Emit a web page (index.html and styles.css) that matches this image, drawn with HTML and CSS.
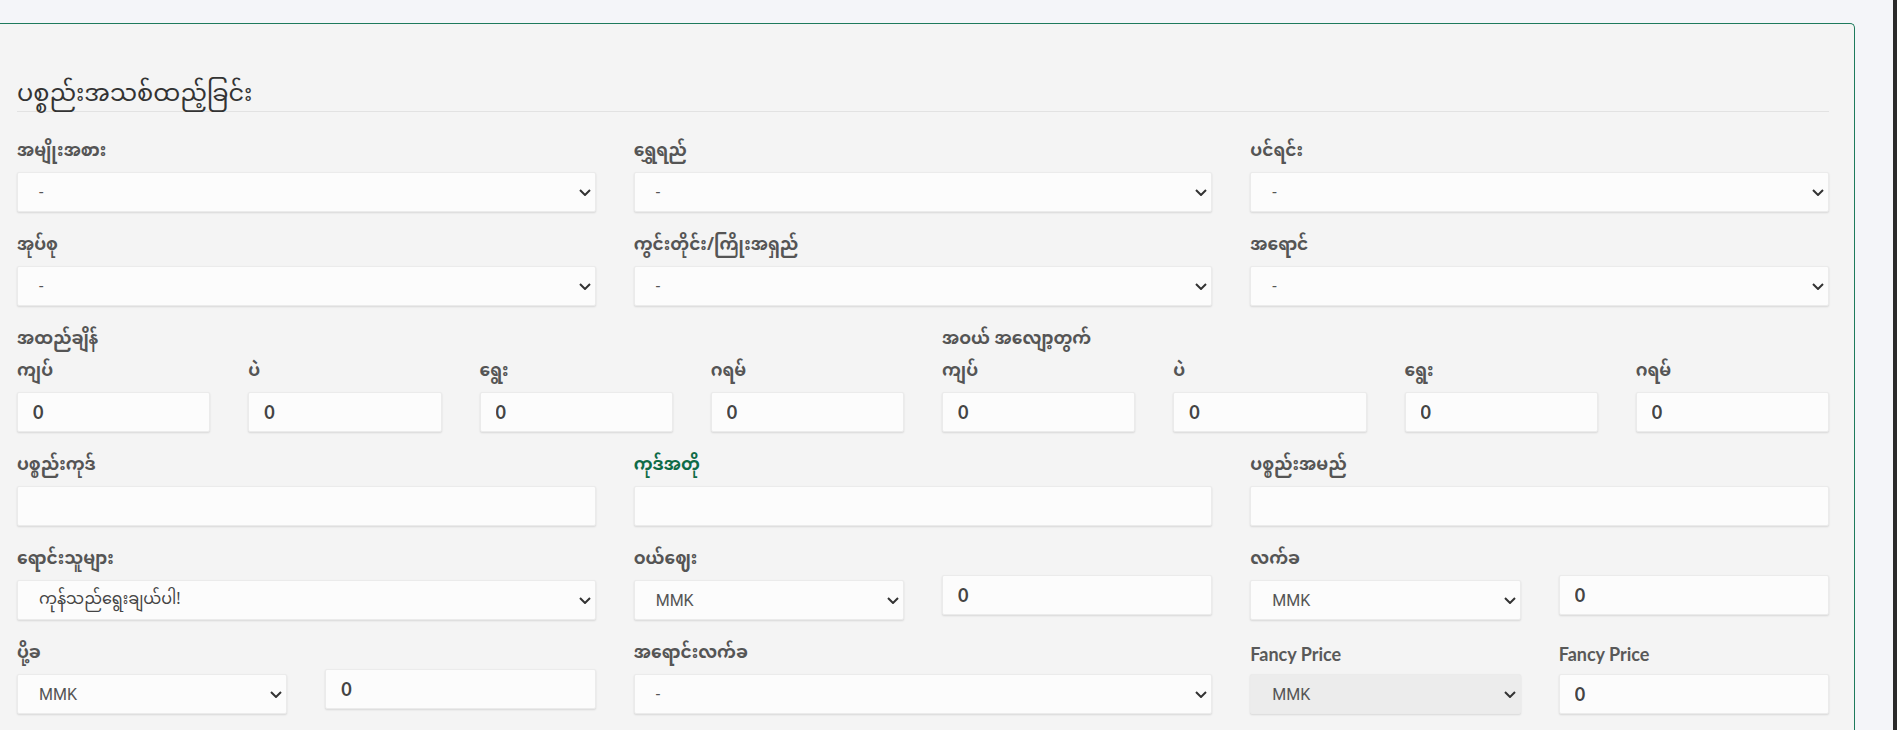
FILE: index.html
```html
<!DOCTYPE html>
<html lang="my">
<head>
<meta charset="utf-8">
<title>ပစ္စည်းအသစ်ထည့်ခြင်း</title>
<link rel="stylesheet" href="styles.css">
</head>
<body>
<div class="page">
  <main class="main">
    <section class="card">
      <div class="heading"><h4 class="title">ပစ္စည်းအသစ်ထည့်ခြင်း</h4></div>

      <div class="row3">
        <div class="group">
          <label class="lbl">အမျိုးအစား</label>
          <div class="sel"><span>-</span><svg class="chev" viewBox="0 0 12 7" width="12" height="7"><path d="M1 1l5 5 5-5"/></svg></div>
        </div>
        <div class="group">
          <label class="lbl">ရွှေရည်</label>
          <div class="sel"><span>-</span><svg class="chev" viewBox="0 0 12 7" width="12" height="7"><path d="M1 1l5 5 5-5"/></svg></div>
        </div>
        <div class="group">
          <label class="lbl">ပင်ရင်း</label>
          <div class="sel"><span>-</span><svg class="chev" viewBox="0 0 12 7" width="12" height="7"><path d="M1 1l5 5 5-5"/></svg></div>
        </div>
      </div>

      <div class="row3">
        <div class="group">
          <label class="lbl">အုပ်စု</label>
          <div class="sel"><span>-</span><svg class="chev" viewBox="0 0 12 7" width="12" height="7"><path d="M1 1l5 5 5-5"/></svg></div>
        </div>
        <div class="group">
          <label class="lbl">ကွင်းတိုင်း/ကြိုးအရှည်</label>
          <div class="sel"><span>-</span><svg class="chev" viewBox="0 0 12 7" width="12" height="7"><path d="M1 1l5 5 5-5"/></svg></div>
        </div>
        <div class="group">
          <label class="lbl">အရောင်</label>
          <div class="sel"><span>-</span><svg class="chev" viewBox="0 0 12 7" width="12" height="7"><path d="M1 1l5 5 5-5"/></svg></div>
        </div>
      </div>

      <div class="weights">
        <div class="half">
          <div class="lbl head">အထည်ချိန်</div>
          <div class="row4">
            <div class="group"><label class="lbl">ကျပ်</label><input class="inp" type="text" value="0"></div>
            <div class="group"><label class="lbl">ပဲ</label><input class="inp" type="text" value="0"></div>
            <div class="group"><label class="lbl">ရွေး</label><input class="inp" type="text" value="0"></div>
            <div class="group"><label class="lbl">ဂရမ်</label><input class="inp" type="text" value="0"></div>
          </div>
        </div>
        <div class="half">
          <div class="lbl head">အဝယ် အလျော့တွက်</div>
          <div class="row4">
            <div class="group"><label class="lbl">ကျပ်</label><input class="inp" type="text" value="0"></div>
            <div class="group"><label class="lbl">ပဲ</label><input class="inp" type="text" value="0"></div>
            <div class="group"><label class="lbl">ရွေး</label><input class="inp" type="text" value="0"></div>
            <div class="group"><label class="lbl">ဂရမ်</label><input class="inp" type="text" value="0"></div>
          </div>
        </div>
      </div>

      <div class="row3">
        <div class="group">
          <label class="lbl">ပစ္စည်းကုဒ်</label>
          <input class="inp" type="text" value="">
        </div>
        <div class="group">
          <label class="lbl green">ကုဒ်အတို</label>
          <input class="inp" type="text" value="">
        </div>
        <div class="group">
          <label class="lbl">ပစ္စည်းအမည်</label>
          <input class="inp" type="text" value="">
        </div>
      </div>

      <div class="row3">
        <div class="group">
          <label class="lbl">ရောင်းသူများ</label>
          <div class="sel"><span class="mm">ကုန်သည်ရွေးချယ်ပါ!</span><svg class="chev" viewBox="0 0 12 7" width="12" height="7"><path d="M1 1l5 5 5-5"/></svg></div>
        </div>
        <div class="row2">
          <div class="group">
            <label class="lbl">ဝယ်ဈေး</label>
            <div class="sel"><span>MMK</span><svg class="chev" viewBox="0 0 12 7" width="12" height="7"><path d="M1 1l5 5 5-5"/></svg></div>
          </div>
          <div class="group nolabel"><input class="inp" type="text" value="0"></div>
        </div>
        <div class="row2">
          <div class="group">
            <label class="lbl">လက်ခ</label>
            <div class="sel"><span>MMK</span><svg class="chev" viewBox="0 0 12 7" width="12" height="7"><path d="M1 1l5 5 5-5"/></svg></div>
          </div>
          <div class="group nolabel"><input class="inp" type="text" value="0"></div>
        </div>
      </div>

      <div class="row3">
        <div class="row2">
          <div class="group">
            <label class="lbl">ပို့ခ</label>
            <div class="sel"><span>MMK</span><svg class="chev" viewBox="0 0 12 7" width="12" height="7"><path d="M1 1l5 5 5-5"/></svg></div>
          </div>
          <div class="group nolabel"><input class="inp" type="text" value="0"></div>
        </div>
        <div class="group">
          <label class="lbl">အရောင်းလက်ခ</label>
          <div class="sel"><span>-</span><svg class="chev" viewBox="0 0 12 7" width="12" height="7"><path d="M1 1l5 5 5-5"/></svg></div>
        </div>
        <div class="row2">
          <div class="group">
            <label class="lbl en">Fancy Price</label>
            <div class="sel disabled"><span>MMK</span><svg class="chev" viewBox="0 0 12 7" width="12" height="7"><path d="M1 1l5 5 5-5"/></svg></div>
          </div>
          <div class="group">
            <label class="lbl en">Fancy Price</label>
            <input class="inp" type="text" value="0">
          </div>
        </div>
      </div>
    </section>
  </main>
  <aside class="edge"></aside>
</div>
</body>
</html>
```
FILE: styles.css
```css
html, body {
  margin: 0;
  padding: 0;
  height: 100%;
  overflow: hidden;
}
body {
  background: #f4f5f9;
  font-family: "Noto Sans Myanmar", "Padauk", "Myanmar Text", "Noto Sans", sans-serif;
  color: #333;
}
.page {
  display: flex;
  min-height: 730px;
}
.main {
  flex: 1;
  padding: 23px 38px 0 0;
}
.edge {
  width: 4px;
  background: #2a2a2a;
}
.card {
  background: #f4f4f4;
  border: 1px solid #1d7a5c;
  border-left: none;
  border-bottom: none;
  border-top-right-radius: 5px;
  padding: 0 25px 40px 17px;
  min-height: 720px;
}
.heading {
  height: 87px;
  display: flex;
  align-items: flex-end;
  border-bottom: 1px solid #e2e2e2;
  margin-bottom: 30px;
}
.title {
  margin: 0;
  font-size: 24px;
  font-weight: 400;
  line-height: 30px;
  color: #333;
}
.row3 {
  display: grid;
  grid-template-columns: repeat(3, 1fr);
  column-gap: 38px;
  margin-bottom: 24px;
}
.row2 {
  display: grid;
  grid-template-columns: 1fr 1fr;
  column-gap: 38px;
}
.weights {
  display: grid;
  grid-template-columns: 1fr 1fr;
  column-gap: 38px;
  margin-bottom: 24px;
}
.row4 {
  display: grid;
  grid-template-columns: repeat(4, 1fr);
  column-gap: 38px;
}
.group {
  display: flex;
  flex-direction: column;
  min-width: 0;
}
.nolabel {
  padding-top: 25px;
}
.lbl {
  display: block;
  height: 20px;
  line-height: 20px;
  margin-bottom: 10px;
  font-size: 17px;
  font-weight: 700;
  color: #555;
  white-space: nowrap;
}
.lbl.head {
  margin-bottom: 12px;
}
.lbl.green {
  color: #0f6b47;
}
.lbl.en {
  font-family: "Lato", "Noto Sans", sans-serif;
  font-size: 18px;
  color: #595959;
}
.sel, .inp {
  box-sizing: border-box;
  height: 40px;
  background: #fcfcfc;
  border: 1px solid #ebebeb;
  border-radius: 2px;
  box-shadow: 0 1px 2px rgba(0, 0, 0, 0.12);
}
.sel {
  display: flex;
  align-items: center;
  justify-content: space-between;
  padding: 0 4px 0 21px;
  font-family: "Roboto", "Noto Sans", sans-serif;
  font-size: 16px;
  color: #555;
}
.sel .mm {
  font-family: "Noto Sans Myanmar", "Padauk", "Noto Sans", sans-serif;
  font-size: 16px;
  color: #444;
}
.sel.disabled {
  background: #ececec;
}
.chev {
  fill: none;
  stroke: #333;
  stroke-width: 2;
}
.inp {
  width: 100%;
  padding: 0 15px;
  font-family: "Lato", "Noto Sans", sans-serif;
  font-size: 18px;
  font-weight: 700;
  color: #444;
  outline: none;
}
```
